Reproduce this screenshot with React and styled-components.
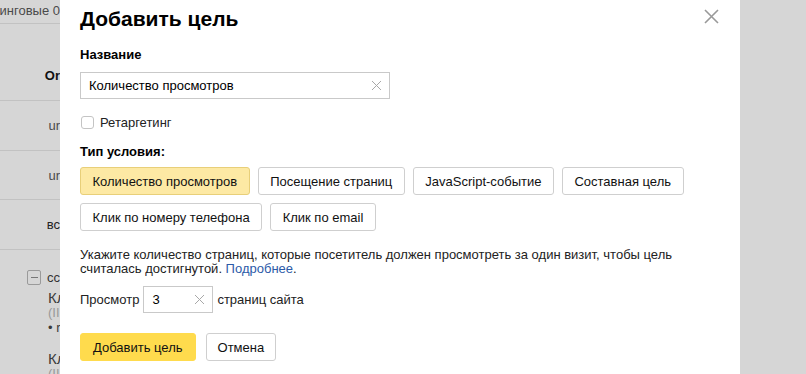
import React from 'react';
import styled, { createGlobalStyle } from 'styled-components';

const GlobalStyle = createGlobalStyle`
    html, body {
        margin: 0;
        padding: 0;
        background: #d6d6d6;
    }
    body {
        font-family: "Liberation Sans", Arial, sans-serif;
        font-size: 13px;
        color: #000;
        overflow: hidden;
    }
`

const Screen = styled.div`
    display: flex;
    width: 806px;
    height: 374px;
    overflow: hidden;
    background: #d6d6d6;
`

const Behind = styled.div`
    width: 60px;
    flex: none;
    overflow: hidden;
    display: flex;
    flex-direction: column;
`

const BehindRow = styled.div`
    flex: none;
    height: ${p => p.h}px;
    border-bottom: ${p => (p.line ? '1px solid #c2c2c2' : 'none')};
    display: flex;
    align-items: ${p => p.align || 'center'};
    justify-content: flex-end;
    padding: ${p => p.pad || '0'};
    white-space: nowrap;
    font-size: 13px;
    color: ${p => p.color || '#4a4a4a'};
    font-weight: ${p => (p.bold ? 700 : 400)};
    box-sizing: border-box;
`

const Tree = styled.div`
    flex: none;
    display: flex;
    flex-direction: column;
    padding: 19px 0 0 27px;
    white-space: nowrap;
    color: #333;
`

const TreeHead = styled.div`
    display: flex;
    align-items: center;
    gap: 6px;
    height: 16px;
`

const MinusBox = styled.span`
    width: 13px;
    height: 13px;
    border: 1px solid #9a9a9a;
    border-radius: 2px;
    display: flex;
    align-items: center;
    justify-content: center;
    &::after {
        content: '';
        width: 7px;
        height: 1px;
        background: #777;
    }
`

const TreeItem = styled.div`
    padding-left: 21px;
    font-size: ${p => p.size || 15}px;
    line-height: ${p => p.lh || 16}px;
    color: ${p => p.color || '#3a3a3a'};
    margin-top: ${p => p.mt || 0}px;
`

const Modal = styled.div`
    width: 680px;
    flex: none;
    background: #fff;
    box-sizing: border-box;
    padding: 5px 20px 0 20px;
    display: flex;
    flex-direction: column;
`

const Header = styled.div`
    display: flex;
    justify-content: space-between;
    align-items: flex-start;
`

const Title = styled.h1`
    margin: 0;
    font-size: 21px;
    line-height: 28px;
    font-weight: 700;
    color: #000;
`

const CloseIcon = styled.svg`
    margin: 4px 1px 0 0;
`

const Label = styled.div`
    font-weight: 700;
    font-size: 13px;
    line-height: 16px;
    margin-top: ${p => p.mt || 0}px;
`

const TextField = styled.div`
    display: flex;
    align-items: center;
    box-sizing: border-box;
    width: ${p => p.w}px;
    height: 27px;
    border: 1px solid #c9c9c9;
    padding: 0 7px 0 8px;
    margin-top: ${p => p.mt || 0}px;
    background: #fff;
`

const FieldValue = styled.span`
    flex: 1;
    font-size: 13px;
    color: #000;
`

const ClearIcon = () => (
    <svg width="11" height="11" viewBox="0 0 11 11">
        <path d="M1 1 L10 10 M10 1 L1 10" stroke="#a8a8a8" strokeWidth="1" fill="none" />
    </svg>
)

const CheckRow = styled.label`
    display: flex;
    align-items: center;
    gap: 6px;
    margin-top: 16px;
    font-size: 13px;
    color: #222;
`

const CheckBox = styled.span`
    width: 13px;
    height: 13px;
    border: 1px solid #c4c4c4;
    border-radius: 3px;
    margin-left: 1px;
    box-sizing: border-box;
    background: #fff;
`

const ButtonGrid = styled.div`
    display: flex;
    flex-wrap: wrap;
    gap: 8px 8px;
    margin-top: 7px;
    width: 620px;
`

const Chip = styled.button`
    font-family: "Liberation Sans", Arial, sans-serif;
    font-size: 13px;
    height: 28px;
    padding: 0 11.5px;
    border-radius: 3px;
    border: 1px solid ${p => (p.active ? '#e8cf79' : '#cfcfcf')};
    background: ${p => (p.active ? '#fde9a4' : '#fff')};
    color: #111;
    cursor: pointer;
`

const Hint = styled.p`
    margin: 17px 0 0 0;
    font-size: 13px;
    line-height: 14px;
    color: #222;
    width: 600px;
`

const MoreLink = styled.a`
    color: #2c5aa8;
    text-decoration: none;
`

const ViewsRow = styled.div`
    display: flex;
    align-items: center;
    gap: 4px;
    margin-top: 10px;
    color: #222;
`

const Actions = styled.div`
    display: flex;
    gap: 10px;
    margin-top: 20px;
`

const ActionButton = styled.button`
    font-family: "Liberation Sans", Arial, sans-serif;
    font-size: 13px;
    height: 28px;
    padding: 0 ${p => (p.primary ? 12 : 11)}px;
    border-radius: 3px;
    border: 1px solid ${p => (p.primary ? '#ffdb4d' : '#cfcfcf')};
    background: ${p => (p.primary ? '#ffdb4d' : '#fff')};
    color: #111;
    cursor: pointer;
`

const Aside = styled.div`
    flex: 1;
    background: #d6d6d6;
`

const conditionTypes = [
    'Количество просмотров',
    'Посещение страниц',
    'JavaScript-событие',
    'Составная цель',
    'Клик по номеру телефона',
    'Клик по email',
]

const App = () => {
    return (
        <>
            <GlobalStyle />
            <Screen>
                <Behind>
                    <BehindRow h={24} line pad="0 0 2px 0">инговые&nbsp;0</BehindRow>
                    <BehindRow h={77} line align="flex-end" pad="0 0 17px 0" bold color="#111">Or</BehindRow>
                    <BehindRow h={50} line>ur</BehindRow>
                    <BehindRow h={49} line>ur</BehindRow>
                    <BehindRow h={50} line color="#222">вс</BehindRow>
                    <Tree>
                        <TreeHead><MinusBox /><span>сс</span></TreeHead>
                        <TreeItem mt={5}>Кл</TreeItem>
                        <TreeItem size={13} lh={13} color="#999">(II</TreeItem>
                        <TreeItem size={13} lh={18}>• r</TreeItem>
                        <TreeItem mt={14}>Кл</TreeItem>
                        <TreeItem size={13} lh={13} color="#999">(II</TreeItem>
                    </Tree>
                </Behind>

                <Modal>
                    <Header>
                        <Title>Добавить цель</Title>
                        <CloseIcon width="15" height="15" viewBox="0 0 15 15">
                            <path d="M1 1 L14 14 M14 1 L1 14" stroke="#999" strokeWidth="1.6" fill="none" />
                        </CloseIcon>
                    </Header>

                    <Label mt={14}>Название</Label>
                    <TextField w={310} mt={9}>
                        <FieldValue>Количество просмотров</FieldValue>
                        <ClearIcon />
                    </TextField>

                    <CheckRow>
                        <CheckBox />
                        Ретаргетинг
                    </CheckRow>

                    <Label mt={14}>Тип условия:</Label>
                    <ButtonGrid>
                        {conditionTypes.map((t, i) => (
                            <Chip key={t} active={i === 0}>{t}</Chip>
                        ))}
                    </ButtonGrid>

                    <Hint>
                        Укажите количество страниц, которые посетитель должен просмотреть за один визит, чтобы цель
                        считалась достигнутой. <MoreLink href="#">Подробнее</MoreLink>.
                    </Hint>

                    <ViewsRow>
                        Просмотр
                        <TextField w={70}>
                            <FieldValue>3</FieldValue>
                            <ClearIcon />
                        </TextField>
                        страниц сайта
                    </ViewsRow>

                    <Actions>
                        <ActionButton primary>Добавить цель</ActionButton>
                        <ActionButton>Отмена</ActionButton>
                    </Actions>
                </Modal>

                <Aside />
            </Screen>
        </>
    )
}

export default App;
